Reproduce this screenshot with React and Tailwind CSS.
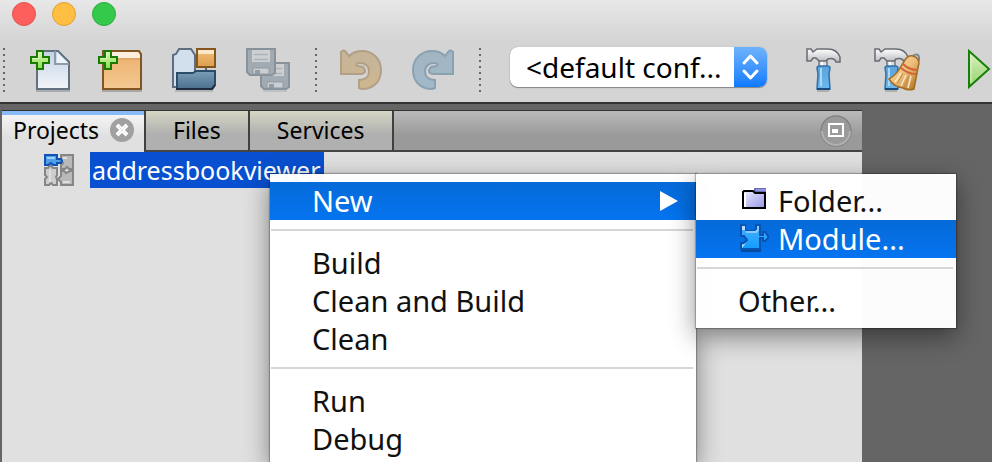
import { useState } from "react";

const toolbarIcon = "block w-12 h-12 shrink-0";

const Gradient = ({ id, from, to }) => (
    <linearGradient id={id} x1="0" y1="0" x2="0" y2="1">
        <stop offset="0" stopColor={from} />
        <stop offset="1" stopColor={to} />
    </linearGradient>
);

const Plus = ({ x }) => (
    <g transform={`translate(${x} 4)`}>
        <path d="M7 1h6v6h6v6h-6v6h-6v-6h-6v-6h6z" fill="url(#plus)" stroke="#1b7a05" strokeWidth="2" />
        <path d="M8.500 2.500v6h-6" fill="none" stroke="#e2fbc5" strokeWidth="1" />
    </g>
);

const NewFileIcon = () => (
    <svg viewBox="0 0 48 48" className={toolbarIcon}>
        <defs>
            <Gradient id="page" from="#c3d3e3" to="#f2f5f9" />
            <Gradient id="plus" from="#d8f9b4" to="#8ade4c" />
        </defs>
        <path d="M13 45h34" stroke="#a9abae" strokeWidth="2" />
        <path d="M14 5h21l11 11v27H14z" fill="url(#page)" stroke="#637080" strokeWidth="2" />
        <path d="M32 5v13h14" fill="none" stroke="#8d9bab" strokeWidth="2" />
        <path d="M34 6l11 11H34z" fill="#eef3f8" />
        <Plus x={7} />
    </svg>
);

const NewProjectIcon = () => (
    <svg viewBox="0 0 48 48" className={toolbarIcon}>
        <defs><Gradient id="box" from="#ecb06a" to="#f3c892" /></defs>
        <path d="M5 45h40" stroke="#a9a7a5" strokeWidth="2" />
        <path d="M6 5h36l2 3v35H6z" fill="url(#box)" stroke="#805521" strokeWidth="2" />
        <path d="M7 6h34l2 3v3H7z" fill="#fdeedd" />
        <path d="M7 13h36" stroke="#cf9a5f" strokeWidth="1" />
        <Plus x={1} />
    </svg>
);

const OpenProjectIcon = () => (
    <svg viewBox="0 0 48 48" className={toolbarIcon}>
        <defs>
            <Gradient id="folderFront" from="#7c9eb7" to="#49708f" />
            <Gradient id="openBox" from="#f3bf7c" to="#dd9f4e" />
        </defs>
        <path d="M4 45h38" stroke="#b2b4b6" strokeWidth="2" />
        <path d="M2 41V9l3-1 3-5h12l4 6v32H5z" fill="#d2e0ed" stroke="#5c6e80" strokeWidth="2" />
        <path d="M35 22v3" stroke="#536779" strokeWidth="2" />
        <path d="M6 27h16l3-2h19v14l-3 4H6z" fill="url(#folderFront)" stroke="#2d4c68" strokeWidth="2" />
        <path d="M5 43h36l3-4" fill="none" stroke="#1c2b3d" strokeWidth="2" />
        <path d="M26 3h18v18H26z" fill="url(#openBox)" stroke="#85561c" strokeWidth="2" />
        <path d="M27 4h16v4H27z" fill="#fbe6ca" />
    </svg>
);

const Disk = ({ x, y }) => (
    <g transform={`translate(${x} ${y})`}>
        <path d="M1 1h28v24l-3 2H4l-3-3z" fill="#a3abb2" stroke="#88929b" strokeWidth="2" />
        <path d="M6 2h18v12H6z" fill="#cdd0d2" />
        <path d="M8 6.500h14M8 11.500h14" stroke="#afb3b6" strokeWidth="1.500" />
        <path d="M7 20h16v6H7z" fill="#cccfd2" stroke="#909aa3" strokeWidth="1" />
        <path d="M9 22h5v4H9z" fill="#929ca5" />
    </g>
);

const SaveAllIcon = () => (
    <svg viewBox="0 0 48 48" className={toolbarIcon}>
        <path d="M18 45h24" stroke="#bec0c2" strokeWidth="2" />
        <Disk x={15} y={16} />
        <Disk x={1} y={2} />
    </svg>
);

const turnPath = "M6 6q3-3 5 0l3 4q5-5 13-5c11 0 19 8 19 19 0 12-8 19-19 19l-3-1v-8c7 0 10-4 10-9 0-5-4-8-9-8-4 0-5 2-2 3l5 1q5 6-2 7H6z";

const UndoIcon = () => (
    <svg viewBox="0 0 48 48" className={toolbarIcon}>
        <defs><Gradient id="undo" from="#c5b49b" to="#cdb78f" /></defs>
        <path d={turnPath} fill="url(#undo)" stroke="#b39f85" strokeWidth="2" />
    </svg>
);

const RedoIcon = () => (
    <svg viewBox="0 0 48 48" className={toolbarIcon}>
        <defs><Gradient id="redo" from="#a2b4c0" to="#a0b9ca" /></defs>
        <path d={turnPath} transform="translate(50 0) scale(-1 1)" fill="url(#redo)" stroke="#8ba1b1" strokeWidth="2" />
    </svg>
);

const Hammer = () => (
    <g>
        <path d="M19 45h12" stroke="#b0aeac" strokeWidth="2" />
        <path d="M21 12h8v10h-8z" fill="#d9dce1" stroke="#75767c" strokeWidth="1.500" />
        <path d="M24 13v9" stroke="#ffffff" strokeWidth="2" />
        <path d="M9 3h4l2 3 4-3h11c6 0 10 3 12 8v5h-4c-1-3-4-4-8-3l-2 2h-7l-3-3h-3l-2 3H9z" fill="url(#steel)" stroke="#696b72" strokeWidth="1.500" />
        <path d="M19 22q0-2 3-2h7q3 0 3 2l-1 6 1 15H19l1-15z" fill="url(#handle)" stroke="#3170a5" strokeWidth="1.500" />
        <path d="M23 22v18" stroke="#a9d8f7" strokeWidth="2" />
        <path d="M19 43h13" stroke="#174c80" strokeWidth="2" />
    </g>
);

const BuildIcon = () => (
    <svg viewBox="0 0 48 48" className={toolbarIcon}>
        <defs>
            <Gradient id="handle" from="#5ba3dc" to="#6cb9ee" />
            <Gradient id="steel" from="#ffffff" to="#b9bbc1" />
        </defs>
        <Hammer />
    </svg>
);

const CleanBuildIcon = () => (
    <svg viewBox="0 0 48 48" className={toolbarIcon}>
        <defs>
            <linearGradient id="broom" x1="0" y1="0" x2="1" y2="1">
                <stop offset="0" stopColor="#f9dfb3" />
                <stop offset="0.500" stopColor="#eebd7a" />
                <stop offset="1" stopColor="#a96a18" />
            </linearGradient>
        </defs>
        <g transform="translate(-6 0)"><Hammer /></g>
        <path d="M40 13c0-5 6-6 7-2v4" fill="none" stroke="#818990" strokeWidth="2" />
        <path d="M33 14q3-5 8-4 6 2 6 7l-2 10-3 16q-6 2-11-1-9-1-14-9 8-5 11-11z" fill="url(#broom)" stroke="#a36a24" strokeWidth="1.500" />
        <path d="M31 18q6 6 15 6M29 22q7 6 15 6" fill="none" stroke="#cf6536" strokeWidth="2" />
        <path d="M29 27l-6 9M34 29l-5 11M39 30l-3 12" stroke="#fbe8c5" strokeWidth="1.500" />
        <path d="M31 27l-6 11M37 30l-5 11" stroke="#c18a45" strokeWidth="1" />
    </svg>
);

const RunIcon = () => (
    <svg viewBox="0 0 48 48" className={toolbarIcon}>
        <defs><Gradient id="run" from="#dff0ca" to="#93d365" /></defs>
        <path d="M23 5l20 18-20 18z" fill="url(#run)" stroke="#178008" strokeWidth="2" />
        <path d="M25 10v27" stroke="#e0f3cf" strokeWidth="1" />
    </svg>
);

const ProjectIcon = () => (
    <svg viewBox="0 0 30 32" className="block w-[30px] h-8 shrink-0">
        <path d="M17 1h12v14h-4l-2-2-2 2h-4v-4l2-2-2-3z" fill="#b9b9b9" stroke="#868686" strokeWidth="2" />
        <path d="M1 14h3l2-3 3 3h4v7l-1 2 1 2v6H9l-2-2-2 2H1v-6l2-2-2-2z" fill="#cdcdcd" stroke="#868686" strokeWidth="2" />
        <path d="M17 17h3l2 2 4-2h3v14H17v-3l-3-3 3-3z" fill="#b9b9b9" stroke="#868686" strokeWidth="2" />
        <path d="M19 4h4M6 16v12M19 28h7" stroke="#dedede" strokeWidth="2" />
        <path d="M1 1h12v4h4l1 2-1 2h-4v2H9L7 9l-3 2H1z" fill="#509fe9" stroke="#1153b4" strokeWidth="2" />
        <path d="M3 4h8" stroke="#9ed0fb" strokeWidth="2" />
    </svg>
);

const FolderIcon = () => (
    <svg viewBox="0 0 32 30" className="block w-8 h-[30px]">
        <defs>
            <linearGradient id="folder" x1="0" y1="0" x2="1" y2="1">
                <stop offset="0" stopColor="#eeeeff" />
                <stop offset="1" stopColor="#9696e6" />
            </linearGradient>
        </defs>
        <path d="M16 2h12v5H16z" fill="#6c6cb5" />
        <path d="M18 4h10" stroke="#9292dc" strokeWidth="2" />
        <path d="M6 5h9l2 2h10v15H5V6z" fill="url(#folder)" stroke="#000000" strokeWidth="2" />
        <path d="M7 7v14" stroke="#ffffff" strokeWidth="2" />
    </svg>
);

const ModuleIcon = () => (
    <svg viewBox="0 0 32 30" className="block w-8 h-[30px]">
        <defs><Gradient id="module" from="#4ab0ff" to="#119cff" /></defs>
        <path d="M3 1h4v4l3 2h5l3-2V1h4v10h3V8h2l3 4v2l-3 3h-2v-3h-3v11H3v-6h3l3-3-3-4H3z" fill="url(#module)" stroke="#0754b4" strokeWidth="2" />
        <path d="M4 2h3v4H4zM4 24v-3l4-2" fill="#bcdfff" />
        <path d="M8 8h10l2-2V2" fill="none" stroke="#8acbff" strokeWidth="2" />
        <path d="M3 27h20" stroke="#064b9e" strokeWidth="2" />
    </svg>
);

const DottedLine = () => (
    <svg viewBox="0 0 2 44" className="block w-0.5 h-11 shrink-0">
        <path d="M1 0v44" stroke="#666666" strokeWidth="2" strokeDasharray="2 4" />
    </svg>
);

const MenuItem = ({ icon, active, children, ...rest }) => (
    <button
        type="button"
        role="menuitem"
        className={`flex w-full h-[38px] items-center gap-2 pl-[42px] pr-[18px] text-left text-[29px] leading-[38px] ${active ? "bg-linear-to-b from-[#066ad8] to-[#0474f0] text-white" : "text-[#111111]"}`}
        {...rest}
    >
        {icon}
        {children}
    </button>
);

const MenuSeparator = () => <div role="separator" className="mt-[9px] mb-[13px] ml-px mr-[3px] h-0.5 bg-[#d6d6d6]" />;

const tabs = ["Files", "Services"];

const App = () => {

    const [config, setConfig] = useState("default");

    return (
        <div className="flex h-screen flex-col overflow-hidden bg-[#656565] font-['Lucida_Grande','Noto_Sans',sans-serif] text-black">
            <header className="shrink-0 border-b-2 border-[#333333] bg-linear-to-b from-[#e8e8e8] to-[#d4d4d4] to-40%">
                <div className="flex h-[38px] gap-4 pl-3 pt-0.5">
                    <button type="button" aria-label="Close" className="size-6 rounded-full border border-[#e2504c] bg-[#fd605c]" />
                    <button type="button" aria-label="Minimize" className="size-6 rounded-full border border-[#dfa035] bg-[#fdbe41]" />
                    <button type="button" aria-label="Zoom" className="size-6 rounded-full border border-[#2bac3a] bg-[#34c94b]" />
                </div>
                <div className="flex h-16 items-center overflow-hidden pl-[3px]">
                    <DottedLine />
                    <div className="ml-[18px] mr-[22px] flex gap-[26px]">
                        <button type="button" aria-label="New File"><NewFileIcon /></button>
                        <button type="button" aria-label="New Project"><NewProjectIcon /></button>
                        <button type="button" aria-label="Open Project"><OpenProjectIcon /></button>
                        <button type="button" aria-label="Save All"><SaveAllIcon /></button>
                    </div>
                    <DottedLine />
                    <div className="ml-[18px] mr-[22px] flex gap-[26px]">
                        <button type="button" aria-label="Undo"><UndoIcon /></button>
                        <button type="button" aria-label="Redo"><RedoIcon /></button>
                    </div>
                    <DottedLine />
                    <div className="mb-1.5 ml-[29px] mr-[31px] grid w-[257px] shrink-0 overflow-hidden rounded-lg bg-white shadow-[0_1px_1px_rgba(0,0,0,0.35),0_0_1px_rgba(0,0,0,0.35)]">
                        <select
                            aria-label="Project configuration"
                            value={config}
                            onChange={(e) => setConfig(e.target.value)}
                            className="col-start-1 row-start-1 h-10 w-full appearance-none pl-4 text-[28px] leading-10 outline-none"
                        >
                            <option value="default">&lt;default conf...</option>
                        </select>
                        <span className="pointer-events-none col-start-1 row-start-1 flex w-[33px] items-center justify-center justify-self-end bg-linear-to-b from-[#6db3fa] to-[#087aff]">
                            <svg viewBox="0 0 33 40" className="h-10 w-[33px]" fill="none" stroke="#ffffff" strokeWidth="3" strokeLinecap="round" strokeLinejoin="round">
                                <path d="M10 16l6.500-7 6.500 7M10 24l6.500 7 6.500-7" />
                            </svg>
                        </span>
                    </div>
                    <div className="flex gap-[26px]">
                        <button type="button" aria-label="Build Project"><BuildIcon /></button>
                        <button type="button" aria-label="Clean and Build Project"><CleanBuildIcon /></button>
                        <button type="button" aria-label="Run Project"><RunIcon /></button>
                    </div>
                </div>
            </header>

            <main className="flex flex-1 pl-0.5 pr-[130px] pt-1.5">
                <section className="relative flex flex-1 flex-col bg-[#e0e0e0]">
                    <div role="tablist" className="flex h-[42px] border-t border-[#333333] bg-linear-to-b from-[#bababa] to-[#9a9a9a] to-60% text-[23px]">
                        <div className="flex w-[142px] items-center gap-[11px] border-t-4 border-[#8abaf8] bg-linear-to-b from-[#f4f4f4] to-[#e0e0e0] to-60% pb-[7px] pl-[11px]">
                            <button type="button" role="tab" aria-selected="true" className="leading-[30px]">Projects</button>
                            <button type="button" aria-label="Close tab">
                                <svg viewBox="0 0 24 24" className="block size-6">
                                    <circle cx="12" cy="12" r="12" fill="#a0a0a0" />
                                    <path d="M7 7l10 10M17 7l-10 10" stroke="#ffffff" strokeWidth="4" />
                                    <path d="M8 8l8 8M16 8l-8 8" stroke="#e4e4e4" strokeWidth="1" />
                                </svg>
                            </button>
                        </div>
                        <div className="flex flex-1 border-b-2 border-[#444444]">
                            {tabs.map((tab) => (
                                <button
                                    key={tab}
                                    type="button"
                                    role="tab"
                                    aria-selected="false"
                                    className="border-l-2 border-[#404040] bg-linear-to-b from-[#d5d6c3] to-[#b0b0b0] to-60% px-[27px] pb-0.5 leading-9"
                                >
                                    {tab}
                                </button>
                            ))}
                            <div className="flex flex-1 items-center justify-end border-l-2 border-[#404040] pr-2.5">
                                <button type="button" aria-label="Minimize window group">
                                    <svg viewBox="0 0 32 32" className="block size-8">
                                        <circle cx="16" cy="16" r="15" fill="#9a9a9a" stroke="#848484" strokeWidth="1.500" />
                                        <path d="M2 16a14 14 0 0 0 28 0" fill="none" stroke="#b2b2b2" strokeWidth="2" />
                                        <path d="M9 9h14v12H9z" fill="none" stroke="#ffffff" strokeWidth="2" />
                                        <path d="M12 14h6v4h-6z" fill="#ffffff" />
                                    </svg>
                                </button>
                            </div>
                        </div>
                    </div>

                    <div role="tree" className="pl-[42px]">
                        <div role="treeitem" aria-selected="true" className="flex h-9 items-center gap-4">
                            <ProjectIcon />
                            <span className="bg-[#0850d0] px-0.5 pr-1 text-[25px] leading-9 text-white">addressbookviewer</span>
                        </div>
                    </div>

                    <div role="menu" className="absolute bottom-0 left-[268px] top-16 w-[426px] bg-white/98 pt-2 shadow-[0_8px_24px_rgba(0,0,0,0.45),0_0_1px_1px_rgba(0,0,0,0.25)]">
                        <div className="relative">
                            <MenuItem active aria-haspopup="menu" aria-expanded="true">
                                <span className="flex-1">New</span>
                                <svg viewBox="0 0 18 20" className="h-5 w-[18px]">
                                    <path d="M0 0l18 10-18 10z" fill="#ffffff" />
                                </svg>
                            </MenuItem>
                            <div role="menu" className="absolute -top-2 left-full w-[260px] bg-white/98 py-2 shadow-[0_8px_24px_rgba(0,0,0,0.45),0_0_1px_1px_rgba(0,0,0,0.25)]">
                                <MenuItem icon={<FolderIcon />}>Folder...</MenuItem>
                                <MenuItem icon={<ModuleIcon />} active>Module...</MenuItem>
                                <MenuSeparator />
                                <MenuItem>Other...</MenuItem>
                            </div>
                        </div>
                        <MenuSeparator />
                        <MenuItem>Build</MenuItem>
                        <MenuItem>Clean and Build</MenuItem>
                        <MenuItem>Clean</MenuItem>
                        <MenuSeparator />
                        <MenuItem>Run</MenuItem>
                        <MenuItem>Debug</MenuItem>
                    </div>
                </section>
            </main>
        </div>
    );
};

export default App;
